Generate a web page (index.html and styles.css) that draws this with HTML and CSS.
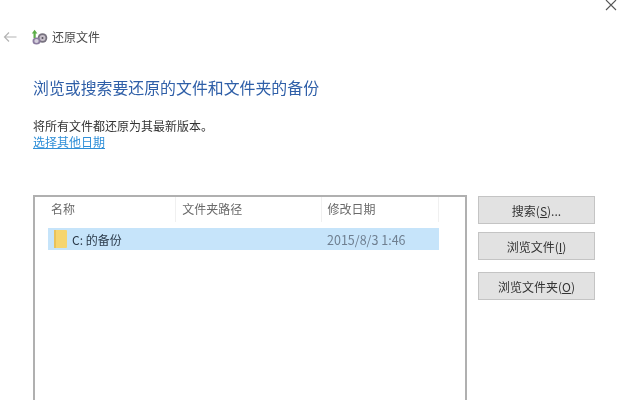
FILE: index.html
```html
<!DOCTYPE html>
<html lang="zh-CN">
<head>
<meta charset="utf-8">
<title>还原文件</title>
<link rel="stylesheet" href="styles.css">
</head>
<body>
<div class="window">
  <div class="close-row">
    <svg class="close" width="12" height="12" viewBox="0 0 12 12"><path d="M1 1L11 11M11 1L1 11" stroke="#555" stroke-width="1.1" fill="none"/></svg>
  </div>
  <div class="nav">
    <svg class="back" width="14" height="12" viewBox="0 0 14 12"><path d="M13.5 6H1.5M6 1.5L1.5 6L6 10.5" stroke="#b4b4b4" stroke-width="1.2" fill="none"/></svg>
    <svg class="app-icon" width="17" height="17" viewBox="0 0 17 17">
      <circle cx="11.5" cy="9" r="4.8" fill="#77727f"/>
      <circle cx="11.5" cy="9" r="3" fill="#c6bfc9"/>
      <circle cx="11.5" cy="9" r="1" fill="#55505c"/>
      <path d="M2.5 9V4.5H.8L3.6 .8 6.4 4.5H4.7V9Z" fill="#5cae48"/>
      <ellipse cx="5.5" cy="12" rx="4" ry="3.6" fill="#8b7ca0"/>
      <ellipse cx="5.5" cy="12" rx="2.2" ry="2" fill="#d5cfdc"/>
    </svg>
    <span class="nav-title">还原文件</span>
  </div>
  <main class="main">
    <h1 class="heading">浏览或搜索要还原的文件和文件夹的备份</h1>
    <p class="note">将所有文件都还原为其最新版本。</p>
    <a class="link" href="#">选择其他日期</a>
    <div class="panel">
      <div class="list">
        <div class="list-head">
          <span class="col col-name">名称</span>
          <span class="col col-path">文件夹路径</span>
          <span class="col col-date">修改日期</span>
        </div>
        <div class="list-row">
          <span class="cell-name">
            <svg class="folder" width="13" height="18" viewBox="0 0 13 18"><rect width="13" height="18" rx="1" fill="#f6d56f"/><rect y="0" width="2" height="18" fill="#e9c25a"/></svg>
            C: 的备份
          </span>
          <span class="cell-date">2015/8/3 1:46</span>
        </div>
      </div>
      <div class="actions">
        <button class="btn" type="button">搜索(<u>S</u>)...</button>
        <button class="btn" type="button">浏览文件(<u>I</u>)</button>
        <button class="btn btn-last" type="button">浏览文件夹(<u>O</u>)</button>
      </div>
    </div>
  </main>
</div>
</body>
</html>
```
FILE: styles.css
```css
html, body {
  margin: 0;
  height: 100%;
  overflow: hidden;
  background: #fff;
}
body {
  font-family: "Noto Sans CJK SC", "Liberation Sans", sans-serif;
  font-size: 12px;
  color: #333;
}
.window {
  height: 400px;
  overflow: hidden;
  filter: blur(0.55px);
}
.close-row {
  display: flex;
  justify-content: flex-end;
  height: 12px;
  padding-right: 6px;
}
.close {
  margin-top: -1px;
}
.nav {
  display: flex;
  align-items: center;
  height: 18px;
  margin-top: 16px;
  padding-left: 3px;
}
.back {
  margin-right: 14px;
}
.app-icon {
  margin-right: 4px;
}
.nav-title {
  font-size: 12px;
  line-height: 18px;
  color: #4a4a4a;
}
.main {
  padding-left: 33px;
}
.heading {
  margin: 30px 0 0;
  font-size: 15.9px;
  line-height: 24px;
  font-weight: 400;
  color: #2f5fa8;
}
.note {
  margin: 18px 0 0;
  font-size: 12px;
  line-height: 16px;
  color: #333;
}
.link {
  display: block;
  width: max-content;
  font-size: 12px;
  line-height: 15px;
  color: #2f8fd8;
  text-decoration: underline;
}
.panel {
  display: flex;
  align-items: flex-start;
  margin-top: 46px;
}
.list {
  box-sizing: border-box;
  width: 434px;
  height: 260px;
  padding: 0 26px 0 13px;
  border: 2px solid #b0b0b0;
  border-bottom: 0;
  flex: none;
}
.list-head {
  display: flex;
  height: 31px;
}
.col {
  box-sizing: border-box;
  height: 25px;
  padding-top: 3px;
  line-height: 18px;
  color: #6a6a6a;
  border-right: 1px solid #f0f0f0;
}
.col-name {
  width: 129px;
  padding-left: 3px;
}
.col-path {
  width: 146px;
  padding-left: 6px;
}
.col-date {
  width: 118px;
  padding-left: 6px;
}
.list-row {
  display: flex;
  align-items: center;
  height: 22px;
  background: #c6e4fa;
}
.cell-name {
  display: flex;
  align-items: center;
  gap: 5px;
  width: 279px;
  padding-left: 6px;
  box-sizing: border-box;
  color: #2b3a4a;
}
.cell-date {
  font-size: 12.5px;
  color: #6f7f90;
}
.actions {
  display: flex;
  flex-direction: column;
  gap: 8px;
  margin-left: 11px;
  margin-top: 1px;
}
.btn {
  box-sizing: border-box;
  width: 117px;
  height: 28px;
  padding: 0;
  font: inherit;
  font-size: 12px;
  color: #333;
  background: #e2e2e2;
  border: 1px solid #c4c4c4;
}
.btn-last {
  margin-top: 4px;
}
```
